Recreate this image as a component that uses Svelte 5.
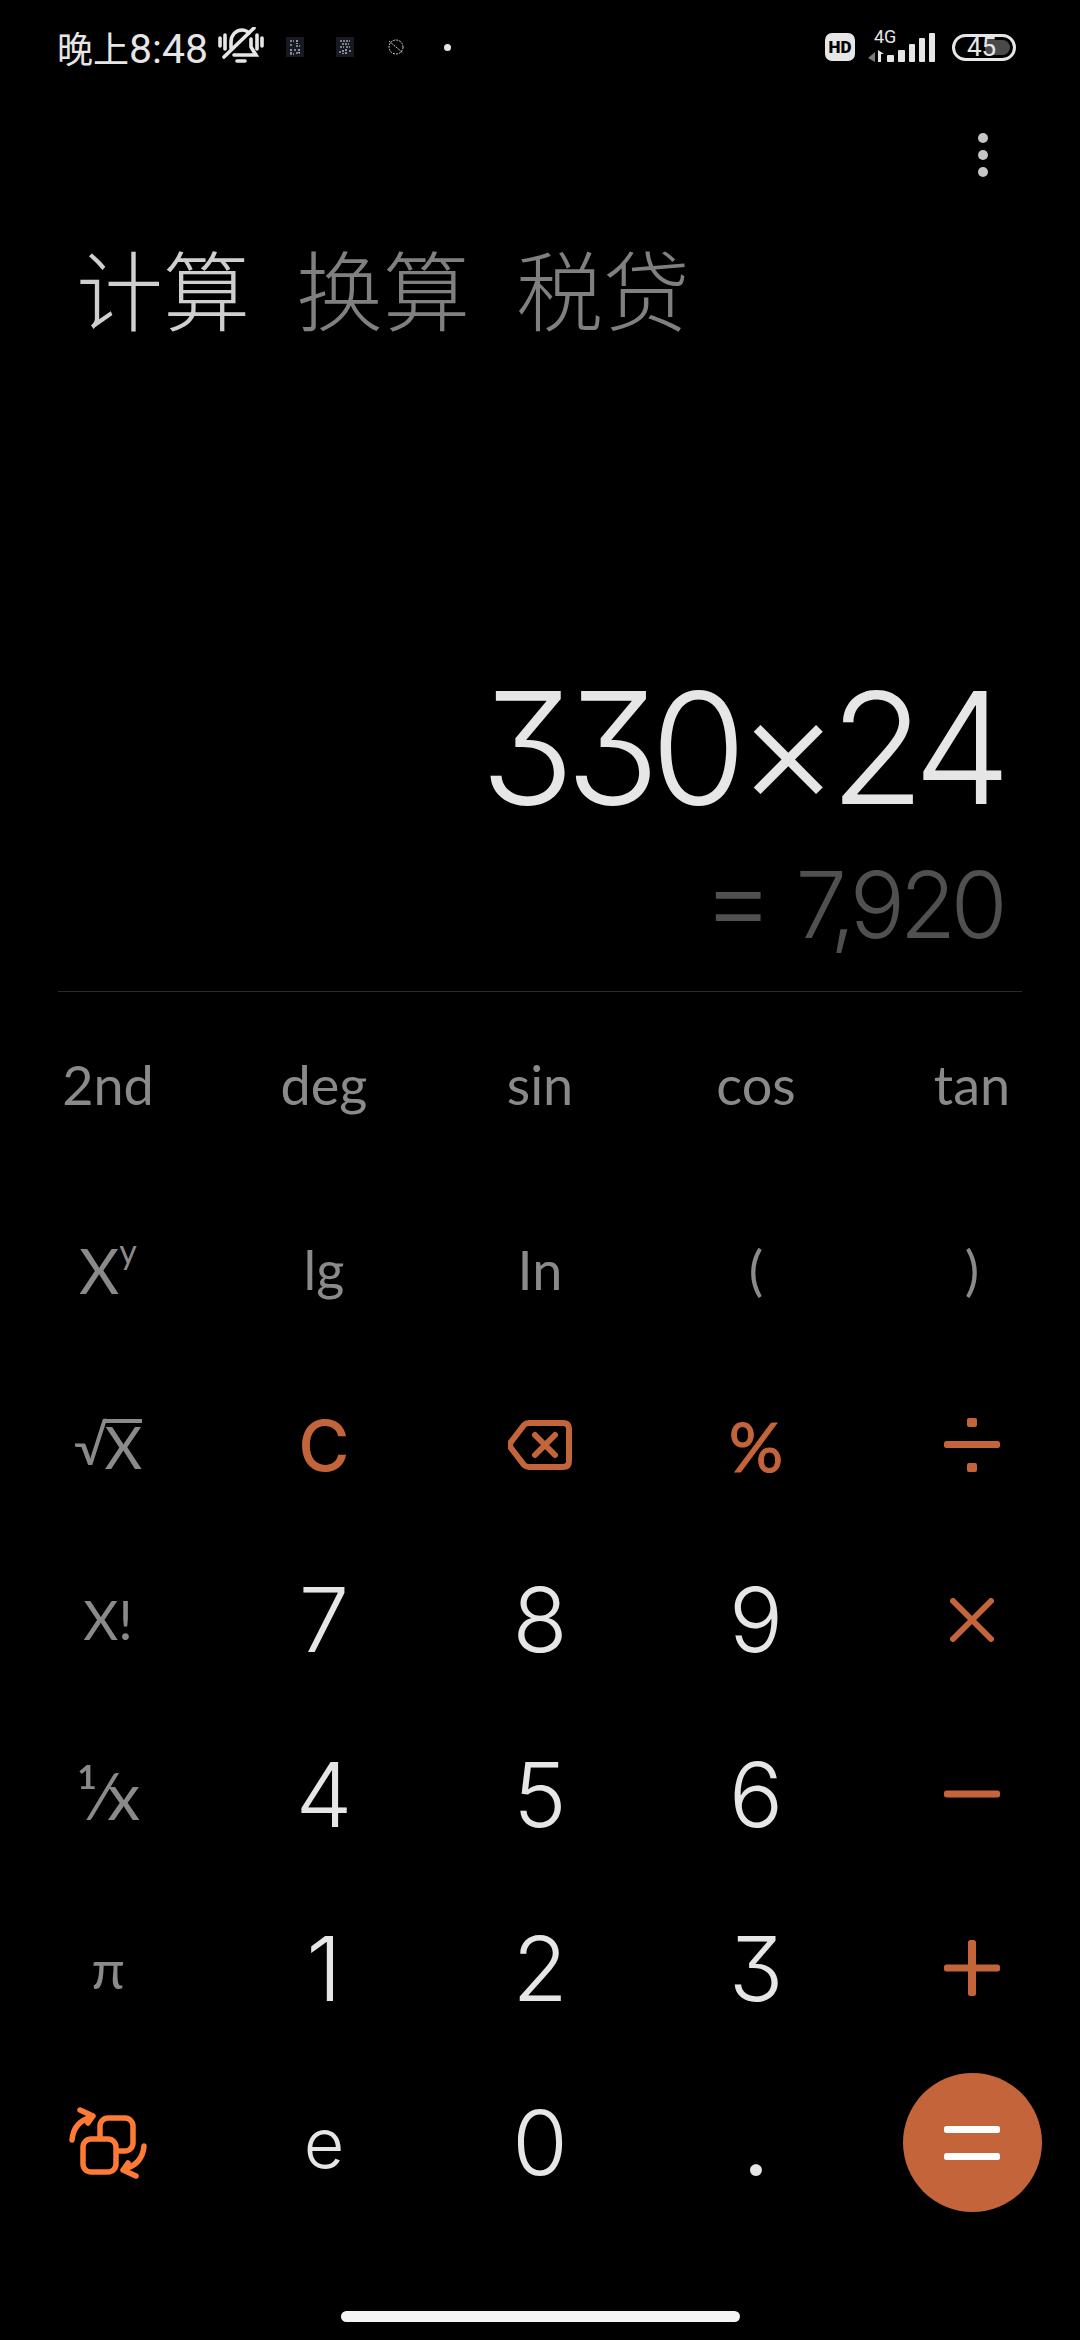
<script>
    const tabs = ['计算', '换算', '税贷'];
    const sciKeys = [
        { kind: 'sci', label: '2nd' },
        { kind: 'sci', label: 'deg' },
        { kind: 'sci', label: 'sin' },
        { kind: 'sci', label: 'cos' },
        { kind: 'sci', label: 'tan' },
        { kind: 'pow' },
        { kind: 'sci', label: 'lg' },
        { kind: 'sci', label: 'In' },
        { kind: 'sci', label: '(' },
        { kind: 'sci', label: ')' }
    ];
    const keys = [
        { kind: 'sqrt' },
        { kind: 'clear', label: 'C' },
        { kind: 'back' },
        { kind: 'op', label: '%' },
        { kind: 'div' },
        { kind: 'sci', label: 'X!' },
        { kind: 'num', label: '7' },
        { kind: 'num', label: '8' },
        { kind: 'num', label: '9' },
        { kind: 'mul' },
        { kind: 'sci frac', label: '¹⁄x' },
        { kind: 'num', label: '4' },
        { kind: 'num', label: '5' },
        { kind: 'num', label: '6' },
        { kind: 'minus' },
        { kind: 'sci', label: 'π' },
        { kind: 'num', label: '1' },
        { kind: 'num', label: '2' },
        { kind: 'num', label: '3' },
        { kind: 'plus' },
        { kind: 'swap' },
        { kind: 'num small', label: 'e' },
        { kind: 'num', label: '0' },
        { kind: 'num point', label: '.' },
        { kind: 'eq' }
    ];
</script>

{#snippet key(k)}
    <div class="key">
        {#if k.kind === 'pow'}
            <span class="sci pow">X<sup>y</sup></span>
        {:else if k.kind === 'sqrt'}
            <span class="sci root"><span class="radical">√</span><span class="under">X</span></span>
        {:else if k.kind === 'back'}
            <svg width="64" height="50" viewBox="0 0 64 50" fill="none" stroke="#c4643a" stroke-width="6" stroke-linecap="round" stroke-linejoin="round">
                <path d="M21 3H55Q61 3 61 9V41Q61 47 55 47H21Q18 47 16 45L3 28Q1 25 3 22L16 5Q18 3 21 3Z" />
                <path d="M27 15L47 35M47 15L27 35" />
            </svg>
        {:else if k.kind === 'div'}
            <svg width="56" height="54" viewBox="0 0 56 54" fill="#c4643a">
                <rect x="23" y="0" width="10" height="9" rx="2" />
                <rect x="0" y="23" width="56" height="7" rx="2.5" />
                <rect x="23" y="45" width="10" height="9" rx="2" />
            </svg>
        {:else if k.kind === 'mul'}
            <svg width="44" height="44" viewBox="0 0 44 44" stroke="#c4643a" stroke-width="6" stroke-linecap="round">
                <path d="M3 3L41 41M41 3L3 41" />
            </svg>
        {:else if k.kind === 'minus'}
            <svg width="56" height="8" viewBox="0 0 56 8"><rect width="56" height="7" y="0.5" rx="2.5" fill="#c4643a" /></svg>
        {:else if k.kind === 'plus'}
            <svg width="56" height="56" viewBox="0 0 56 56" fill="#c4643a">
                <rect x="0" y="24.5" width="56" height="7" rx="2.5" />
                <rect x="24" y="0" width="8" height="56" rx="2.5" />
            </svg>
        {:else if k.kind === 'swap'}
            <svg width="80" height="72" viewBox="0 0 80 72" fill="none" stroke="#ff7a35" stroke-width="5.5" stroke-linecap="round" stroke-linejoin="round">
                <rect x="32" y="11" width="33" height="33" rx="8" />
                <rect x="15" y="32" width="33" height="33" rx="8" fill="#000" />
                <path d="M4 33C5 21 12 13 24 10M12 3L25 9L20 16" />
                <path d="M76 39C75 51 68 59 56 62M68 69L55 63L60 56" />
            </svg>
        {:else if k.kind === 'eq'}
            <div class="equals">
                <svg width="56" height="34" viewBox="0 0 56 34" fill="#fff">
                    <rect y="0" width="56" height="7" rx="2.5" />
                    <rect y="27" width="56" height="7" rx="2.5" />
                </svg>
            </div>
        {:else}
            <span class={k.kind}>{k.label}</span>
        {/if}
    </div>
{/snippet}

<main class="screen">
    <header class="status">
        <div class="status-left">
            <span class="time"><span class="cjk">晚上</span>8:48</span>
            <svg class="bell" width="46" height="40" viewBox="0 0 46 40" fill="none" stroke="#e6e6e6" stroke-width="3.6" stroke-linecap="round">
                <path d="M2 11V19M7 8V22M39 8V22M44 11V19" />
                <path d="M13 21V15C13 8 18 3 24 3C27 3 29 4 31 6" />
                <path d="M33 12V20L38 28H16" />
                <path d="M6 30L36 1" />
                <path d="M19 34H27" />
            </svg>
            <svg class="mini" width="18" height="20" viewBox="0 0 18 20">
                <rect width="18" height="20" fill="#171a22" />
                <path d="M4 4H8M11 3V7M4 8H7M10 9H14M5 12V16M8 13H11M13 12V16M4 17H8M10 16H14" stroke="#e6e6e6" stroke-width="1.2" stroke-dasharray="2 1" />
            </svg>
            <svg class="mini" width="18" height="20" viewBox="0 0 18 20">
                <rect width="18" height="20" fill="#171a22" />
                <path d="M4 4H14M6 7H13M4 10H8M10 10H14M7 13V17M10 12V17M13 14H15M3 15H5" stroke="#e6e6e6" stroke-width="1.2" stroke-dasharray="2 1" />
            </svg>
            <svg class="mini" width="20" height="20" viewBox="0 0 20 20" fill="none" stroke="#d0d0d0" stroke-width="1" stroke-dasharray="2 1">
                <circle cx="10" cy="10" r="7" />
                <path d="M3 4L10 10M10 10L17 16" />
            </svg>
            <span class="dot"></span>
        </div>
        <div class="status-right">
            <span class="hd">HD</span>
            <svg class="signal" width="68" height="42" viewBox="0 -8 68 42" fill="#e6e6e6">
                <text x="6" y="13" class="net">4G</text>
                <path d="M7 22V32L0 28Z" fill="#7a7a7a" />
                <path d="M10 32V20L16 24H13V32Z" />
                <rect x="19" y="25" width="7" height="7" rx="1" />
                <rect x="30" y="20" width="7" height="12" rx="1" />
                <rect x="41" y="14" width="6" height="18" rx="1" />
                <rect x="51" y="8" width="6" height="24" rx="1" />
                <rect x="61" y="3" width="6" height="29" rx="1" />
            </svg>
            <div class="battery"><span class="fill"></span><span class="level">45</span></div>
        </div>
    </header>

    <div class="menu">
        <span></span><span></span><span></span>
    </div>

    <nav class="tabs">
        {#each tabs as tab, i}
            <span class:active={i === 0}>{tab}</span>
        {/each}
    </nav>

    <section class="display">
        <div class="expr">330×24</div>
        <div class="result"><span class="result-eq">=</span>7,920</div>
    </section>

    <div class="divider"></div>

    <section class="keypad top">
        {#each sciKeys as k}
            {@render key(k)}
        {/each}
    </section>
    <section class="keypad">
        {#each keys as k}
            {@render key(k)}
        {/each}
    </section>

    <div class="home"></div>
</main>

<style>
    :global(body) {
        margin: 0;
        background: #000;
    }

    .screen {
        width: 1080px;
        height: 2340px;
        background: #000;
        display: flex;
        flex-direction: column;
        overflow: hidden;
        font-family: Inter, "Noto Sans CJK SC", sans-serif;
        font-feature-settings: "cv09";
    }

    .status {
        height: 94px;
        flex: none;
        display: flex;
        justify-content: space-between;
        align-items: center;
        padding: 0 64px 0 57px;
        color: #e6e6e6;
    }

    .status-left, .status-right {
        display: flex;
        align-items: center;
    }

    .time {
        font: 400 41px Roboto, sans-serif;
        margin-right: 10px;
    }

    .cjk {
        font: 400 36px "Noto Sans CJK SC", sans-serif;
    }

    .mini {
        margin-left: 32px;
    }

    .bell + .mini {
        margin-left: 22px;
    }

    .dot {
        width: 7px;
        height: 7px;
        border-radius: 50%;
        background: #e6e6e6;
        margin-left: 38px;
    }

    .hd {
        width: 30px;
        height: 28px;
        border-radius: 7px;
        background: #e6e6e6;
        color: #000;
        font: 900 17px Roboto, sans-serif;
        display: flex;
        align-items: center;
        justify-content: center;
        margin-right: 13px;
    }

    .signal {
        margin-top: -8px;
    }

    .net {
        font: 400 18px Roboto, sans-serif;
    }

    .battery {
        position: relative;
        width: 58px;
        height: 21px;
        margin-left: 16px;
        border: 3px solid #e6e6e6;
        border-radius: 14px;
        display: flex;
        align-items: center;
    }

    .fill {
        position: absolute;
        left: 30px;
        right: 3px;
        top: 3px;
        bottom: 3px;
        border-radius: 0 8px 8px 0;
        background: #4a4a4a;
    }

    .level {
        position: relative;
        margin-left: 12px;
        font: 400 26px Roboto, sans-serif;
        line-height: 1;
        color: #e6e6e6;
    }

    .menu {
        height: 122px;
        flex: none;
        display: flex;
        flex-direction: column;
        align-items: flex-end;
        justify-content: center;
        gap: 7px;
        padding-right: 92px;
    }

    .menu span {
        width: 10px;
        height: 10px;
        border-radius: 50%;
        background: #c6c6c6;
    }

    .tabs {
        height: 120px;
        margin-top: 11px;
        flex: none;
        display: flex;
        align-items: center;
        gap: 46px;
        padding-left: 76px;
        font: 300 87px "Noto Sans CJK SC", sans-serif;
        color: #808080;
    }

    .tabs .active {
        color: #cfcfcf;
    }

    .display {
        flex: 1;
        display: flex;
        flex-direction: column;
        justify-content: flex-end;
        align-items: flex-end;
        padding-right: 78px;
        padding-bottom: 27px;
    }

    .expr {
        font-size: 155px;
        font-weight: 300;
        line-height: 190px;
        letter-spacing: -9px;
        color: #e6e6e6;
    }

    .result {
        font-size: 92px;
        font-weight: 300;
        line-height: 119px;
        letter-spacing: -5.5px;
        color: #505050;
    }

    .result-eq {
        display: inline-block;
        font-size: 110px;
        font-weight: 300;
        line-height: 1;
        margin-right: 27px;
    }

    .divider {
        height: 1px;
        flex: none;
        margin: 0 58px;
        background: #2b2b2b;
    }

    .keypad {
        display: grid;
        grid-template-columns: repeat(5, 216px);
        grid-auto-rows: 174.4px;
        flex: none;
    }

    .keypad.top {
        grid-auto-rows: 185px;
        margin-top: 0;
        margin-bottom: -4px;
    }

    .key {
        display: flex;
        align-items: center;
        justify-content: center;
    }

    .sci {
        font-family: Lato, sans-serif;
        font-size: 54px;
        font-weight: 400;
        color: #8a8a8a;
    }

    .frac {
        font-size: 66px;
    }

    .pow {
        font-size: 62px;
    }

    .pow sup {
        font-size: 34px;
        line-height: 0;
        vertical-align: 30px;
    }

    .root {
        display: flex;
        align-items: flex-end;
    }

    .radical {
        font-size: 54px;
        line-height: 52px;
        margin-right: -3px;
    }

    .under {
        border-top: 4px solid #8a8a8a;
        line-height: 48px;
        font-size: 58px;
    }

    .num {
        font-size: 90px;
        font-weight: 300;
        color: #e6e6e6;
    }

    .small {
        font-size: 70px;
        font-weight: 300;
    }

    .point {
        font-weight: 400;
    }

    .clear {
        font-size: 70px;
        font-weight: 500;
        color: #c4643a;
    }

    .op {
        font-family: Lato, sans-serif;
        font-size: 68px;
        font-weight: 400;
        color: #c4643a;
        -webkit-text-stroke: 1px #c4643a;
    }

    .equals {
        width: 139px;
        height: 139px;
        border-radius: 50%;
        background: #c4643a;
        display: flex;
        align-items: center;
        justify-content: center;
    }

    .home {
        width: 399px;
        height: 11px;
        flex: none;
        margin: 81px auto 18px;
        border-radius: 6px;
        background: #f5f5f5;
    }
</style>
